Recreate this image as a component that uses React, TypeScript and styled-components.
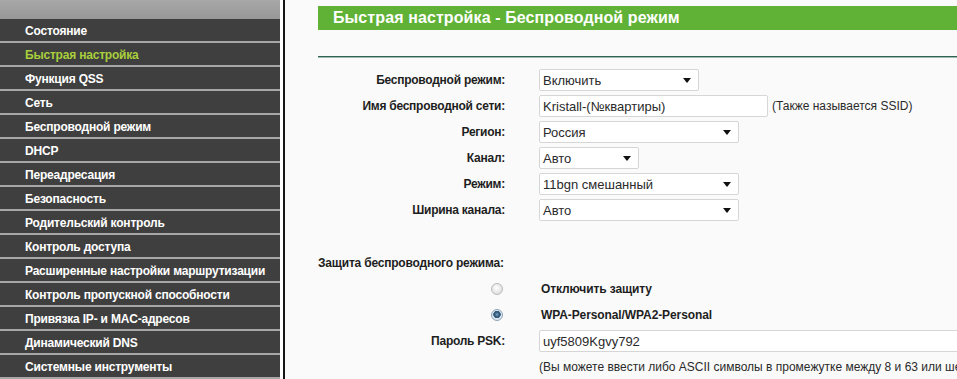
import React from 'react'
import styled, { createGlobalStyle } from 'styled-components'

const GlobalStyle = createGlobalStyle`
    html, body {
        margin: 0;
        padding: 0;
        background: #ffffff;
        overflow: hidden;
    }
    body {
        font-family: "Liberation Sans", Arial, sans-serif;
    }
`

const Page = styled.div`
    display: flex;
    width: 957px;
    height: 379px;
    overflow: hidden;
    background: #ffffff;
`

const Sidebar = styled.nav`
    width: 280px;
    flex: none;
    display: flex;
    flex-direction: column;
    background: #a7a7a7;
`

const SideTop = styled.div`
    height: 19px;
    background: linear-gradient(#a8a8a8, #979797);
`

const MenuItem = styled.div<{ $active?: boolean }>`
    height: 22px;
    margin-bottom: 2px;
    padding: 1px 0 0 25px;
    box-sizing: border-box;
    display: flex;
    align-items: center;
    background: #3f3f3f;
    color: ${({ $active }) => ($active ? '#a9d03c' : '#ffffff')};
    font-size: 12px;
    font-weight: bold;
    letter-spacing: -0.2px;
    white-space: nowrap;
`

const Main = styled.main`
    flex: 1;
    min-width: 0;
    margin-left: 3px;
    border-left: 2px solid #161616;
    background: #fafafa;
    padding: 6px 0 0 33px;
`

const TitleBar = styled.div`
    height: 24px;
    padding-left: 15px;
    display: flex;
    align-items: center;
    background: #5fb235;
    color: #ffffff;
    font-size: 16px;
    font-weight: bold;
    letter-spacing: 0.1px;
    white-space: nowrap;
`

const Divider = styled.div`
    height: 1px;
    margin-top: 26px;
    background: #2f6453;
    border-bottom: 1px solid #9fb8ad;
`

const FormGrid = styled.div<{ $top: number }>`
    display: grid;
    grid-template-columns: 187px 1fr;
    column-gap: 34px;
    grid-auto-rows: 26px;
    margin-top: ${({ $top }) => $top}px;
`

const Label = styled.div`
    align-self: center;
    text-align: right;
    color: #1e1e1e;
    font-size: 12px;
    font-weight: bold;
    letter-spacing: -0.25px;
    white-space: nowrap;
`

const SectionTitle = styled.div`
    height: 26px;
    margin-top: 27px;
    display: flex;
    align-items: center;
    color: #1e1e1e;
    font-size: 12px;
    font-weight: bold;
    letter-spacing: -0.2px;
`

const FieldCell = styled.div`
    display: flex;
    align-items: center;
    gap: 4px;
    white-space: nowrap;
`

const Box = styled.div<{ $w: number }>`
    width: ${({ $w }) => $w}px;
    height: 22px;
    flex: none;
    box-sizing: border-box;
    padding: 0 7px 0 3px;
    display: flex;
    align-items: center;
    justify-content: space-between;
    border: 1px solid #d6d6d6;
    border-radius: 2px;
    background: #ffffff;
    color: #2a2a2a;
    font-size: 13px;
`

const Arrow = styled.span`
    width: 0;
    height: 0;
    border-left: 4px solid transparent;
    border-right: 4px solid transparent;
    border-top: 5px solid #111111;
`

const Hint = styled.span`
    color: #2a2a2a;
    font-size: 12px;
`

const Radio = styled.span<{ $checked?: boolean }>`
    justify-self: end;
    align-self: center;
    margin-right: 2px;
    width: 12px;
    height: 12px;
    box-sizing: border-box;
    border-radius: 50%;
    border: 1px solid ${({ $checked }) => ($checked ? '#8ea3b8' : '#b9b9b9')};
    background: ${({ $checked }) =>
        $checked
            ? 'radial-gradient(circle at 50% 45%, #7fa3c4 0, #2f5778 2.5px, #3d6384 3.5px, #dfe7ee 4px)'
            : 'radial-gradient(circle at 45% 40%, #ffffff 0, #e4e4e4 5px)'};
`

const Option = styled.div`
    align-self: center;
    padding-left: 2px;
    color: #1e1e1e;
    font-size: 12px;
    font-weight: bold;
    letter-spacing: -0.1px;
    white-space: nowrap;
`

const menu = [
    'Состояние',
    'Быстрая настройка',
    'Функция QSS',
    'Сеть',
    'Беспроводной режим',
    'DHCP',
    'Переадресация',
    'Безопасность',
    'Родительский контроль',
    'Контроль доступа',
    'Расширенные настройки маршрутизации',
    'Контроль пропускной способности',
    'Привязка IP- и MAC-адресов',
    'Динамический DNS',
    'Системные инструменты',
]

const SelectBox = ({ w, value }: { w: number; value: string }) => (
    <Box $w={w}>
        <span>{value}</span>
        <Arrow />
    </Box>
)

const App = () => {
    return (
        <Page>
            <GlobalStyle />
            <Sidebar>
                <SideTop />
                {menu.map((item) => (
                    <MenuItem key={item} $active={item === 'Быстрая настройка'}>
                        {item}
                    </MenuItem>
                ))}
            </Sidebar>

            <Main>
                <TitleBar>Быстрая настройка - Беспроводной режим</TitleBar>
                <Divider />

                <FormGrid $top={9}>
                    <Label>Беспроводной режим:</Label>
                    <FieldCell><SelectBox w={160} value="Включить" /></FieldCell>

                    <Label>Имя беспроводной сети:</Label>
                    <FieldCell>
                        <Box $w={229}>Kristall-(№квартиры)</Box>
                        <Hint>(Также называется SSID)</Hint>
                    </FieldCell>

                    <Label>Регион:</Label>
                    <FieldCell><SelectBox w={200} value="Россия" /></FieldCell>

                    <Label>Канал:</Label>
                    <FieldCell><SelectBox w={100} value="Авто" /></FieldCell>

                    <Label>Режим:</Label>
                    <FieldCell><SelectBox w={200} value="11bgn смешанный" /></FieldCell>

                    <Label>Ширина канала:</Label>
                    <FieldCell><SelectBox w={200} value="Авто" /></FieldCell>
                </FormGrid>

                <SectionTitle>Защита беспроводного режима:</SectionTitle>

                <FormGrid $top={0}>
                    <Radio />
                    <Option>Отключить защиту</Option>

                    <Radio $checked />
                    <Option>WPA-Personal/WPA2-Personal</Option>

                    <Label>Пароль PSK:</Label>
                    <FieldCell><Box $w={440}>uyf5809Kgvy792</Box></FieldCell>

                    <span />
                    <FieldCell>
                        <Hint>(Вы можете ввести либо ASCII символы в промежутке между 8 и 63 или шестнадцатеричные символы)</Hint>
                    </FieldCell>
                </FormGrid>
            </Main>
        </Page>
    )
}

export default App
